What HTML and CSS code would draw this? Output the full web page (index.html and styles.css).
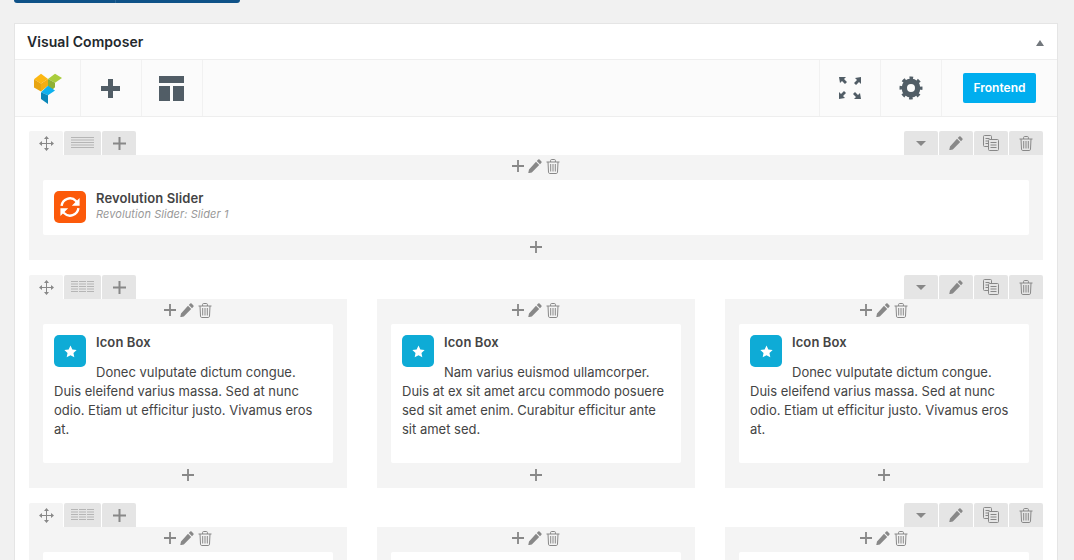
FILE: index.html
```html
<!DOCTYPE html>
<html lang="en">
<head>
<meta charset="utf-8">
<title>Visual Composer</title>
<link rel="stylesheet" href="styles.css">
</head>
<body>
<svg class="sprites" aria-hidden="true">
  <symbol id="i-plus" viewBox="0 0 13 13"><path d="M5.500 0h2v5.500H13v2H7.500V13h-2V7.500H0v-2h5.500z"/></symbol>
  <symbol id="i-pencil" viewBox="0 0 14 14"><path d="M10.200.6a1 1 0 0 1 1.400 0l1.800 1.800a1 1 0 0 1 0 1.400l-1.400 1.400-3.200-3.200zM8 2.800l3.200 3.200-7.400 7.400-3.600.9.800-3.700z"/></symbol>
  <symbol id="i-trash" viewBox="0 0 14 15"><path fill="none" stroke="currentColor" d="M.5 3h13M2 3l.5 10.200c0 .7.5 1.300 1.200 1.300h6.600c.7 0 1.200-.6 1.200-1.300L12 3M4.600 3V1.400c0-.5.4-.9.9-.9h3c.5 0 .9.4.9.9V3M4.700 5v7.500M7 5v7.500M9.300 5v7.500"/></symbol>
  <symbol id="i-copy" viewBox="0 0 16 16"><path fill="none" stroke="currentColor" d="M5.500 11.500h-4a1 1 0 0 1-1-1v-9a1 1 0 0 1 1-1h6a1 1 0 0 1 1 1V4M2.500 3.500h4M2.500 6h2.500M2.500 8.500h2.500M6.500 4.500h8a1 1 0 0 1 1 1v9a1 1 0 0 1-1 1h-8a1 1 0 0 1-1-1v-9a1 1 0 0 1 1-1zM7.500 7.500h6M7.500 10h6M7.500 12.500h6"/></symbol>
  <symbol id="i-move" viewBox="0 0 15 15"><path d="M7.500 0 10 3H8v4h4V5l3 2.500L12 10V8H8v4h2l-2.500 3L5 12h2V8H3v2L0 7.500 3 5v2h4V3H5z"/></symbol>
  <symbol id="i-star" viewBox="0 0 14 14"><path d="M7 .6l2 4.200 4.600.6-3.400 3.200.9 4.600L7 11l-4.100 2.200.9-4.600L.4 5.400 5 4.800z"/></symbol>
  <symbol id="i-rows1" viewBox="0 0 23 12"><path d="M0 .5h23M0 3h23M0 5.500h23M0 8h23M0 10.500h23" stroke="currentColor" fill="none"/></symbol>
  <symbol id="i-rows3" viewBox="0 0 23 12"><path d="M0 .5h7M0 3h7M0 5.500h7M0 8h7M0 10.500h7M8 .5h7M8 3h7M8 5.500h7M8 8h7M8 10.500h7M16 .5h7M16 3h7M16 5.500h7M16 8h7M16 10.500h7" stroke="currentColor" fill="none"/></symbol>
</svg>

<div class="top-buttons"><span class="top-btn top-btn-a"></span><span class="top-btn top-btn-b"></span></div>

<section class="panel">
  <h2 class="panel-title"><span>Visual Composer</span><i class="panel-caret"></i></h2>
  <nav class="navbar">
    <div class="nav-cell nav-logo">
      <svg width="28" height="31" viewBox="0 0 28 31">
        <path fill="#fcb712" d="M0 6.300 7 .7l7 5.400-7 4.400z"/>
        <path fill="#e8a511" d="M0 6.300l7 4.200v8L0 14.500z"/>
        <path fill="#f4ae12" d="M7 10.500l7-4.400v6.700L7 18.500z"/>
        <path fill="#a9cd3c" d="M14 6.100 21 .8l7 4.300-7 4.600z"/>
        <path fill="#8fb135" d="M14 6.100l7 3.600v4.500l-7 6.300z"/>
        <path fill="#0db1ee" d="M7 19.300l7-6.500 7 4.700-7 4.800z"/>
        <path fill="#0a87b8" d="M7 19.300l7 3V31l-7-5z"/>
      </svg>
    </div>
    <div class="nav-cell nav-cell-tool">
      <svg class="nav-icon" width="19" height="19" viewBox="0 0 19 19"><path d="M7 0h5v7h7v5h-7v7H7v-7H0V7h7z"/></svg>
    </div>
    <div class="nav-cell nav-cell-tool">
      <div class="layout-icon"><span class="layout-top"></span><span class="layout-left"></span><span class="layout-right"></span></div>
    </div>
    <div class="nav-spacer"></div>
    <div class="nav-cell nav-cell-left">
      <svg class="nav-icon" width="22" height="22" viewBox="0 0 22 22">
        <path d="M0 0h7L5 2l3 3-2 2-3-3-2 2zM22 0v7l-2-2-3 3-2-2 3-3-2-2zM0 22v-7l2 2 3-3 2 2-3 3 2 2zM22 22h-7l2-2-3-3 2-2 3 3 2-2z"/>
      </svg>
    </div>
    <div class="nav-cell nav-cell-left">
      <svg class="gear" width="24" height="24" viewBox="0 0 24 24">
        <circle class="gear-ring" cx="12" cy="12" r="6.700"/>
        <circle class="gear-teeth" cx="12" cy="12" r="10"/>
      </svg>
    </div>
    <div class="nav-action"><a class="btn-frontend">Frontend</a></div>
  </nav>

  <div class="rows">
    <div class="row">
      <div class="row-tabs">
        <div class="tab-group">
          <span class="tab tab-move"><svg width="15" height="15"><use href="#i-move"/></svg></span>
          <span class="tab tab-layout"><svg class="lines" width="23" height="12"><use href="#i-rows1"/></svg></span>
          <span class="tab tab-add"><svg width="13" height="13"><use href="#i-plus"/></svg></span>
        </div>
        <div class="tab-group">
          <span class="tab tab-action"><i class="tab-caret"></i></span>
          <span class="tab tab-action"><svg width="14" height="14"><use href="#i-pencil"/></svg></span>
          <span class="tab tab-action"><svg width="16" height="16"><use href="#i-copy"/></svg></span>
          <span class="tab tab-action"><svg width="14" height="15"><use href="#i-trash"/></svg></span>
        </div>
      </div>
      <div class="columns">
        <div class="column">
          <div class="col-controls"><svg width="12" height="12"><use href="#i-plus"/></svg><svg width="14" height="14"><use href="#i-pencil"/></svg><svg width="14" height="15"><use href="#i-trash"/></svg></div>
          <div class="element element-slider">
            <span class="el-icon el-icon-rev">
              <svg width="24" height="24" viewBox="0 0 20 20"><path fill="none" stroke="#fff" stroke-width="2" d="M3 9a7 7 0 0 1 12-4l1.500 2M17 11a7 7 0 0 1-12 4l-1.500-2"/><path fill="#fff" d="M18 2.500V9h-6.500zM2 17.500V11h6.500z"/></svg>
            </span>
            <div class="el-title">Revolution Slider</div>
            <div class="el-sub">Revolution Slider: Slider 1</div>
          </div>
          <div class="col-bottom"><svg width="12" height="12"><use href="#i-plus"/></svg></div>
        </div>
      </div>
    </div>

    <div class="row">
      <div class="row-tabs">
        <div class="tab-group">
          <span class="tab tab-move"><svg width="15" height="15"><use href="#i-move"/></svg></span>
          <span class="tab tab-layout"><svg class="lines" width="23" height="12"><use href="#i-rows3"/></svg></span>
          <span class="tab tab-add"><svg width="13" height="13"><use href="#i-plus"/></svg></span>
        </div>
        <div class="tab-group">
          <span class="tab tab-action"><i class="tab-caret"></i></span>
          <span class="tab tab-action"><svg width="14" height="14"><use href="#i-pencil"/></svg></span>
          <span class="tab tab-action"><svg width="16" height="16"><use href="#i-copy"/></svg></span>
          <span class="tab tab-action"><svg width="14" height="15"><use href="#i-trash"/></svg></span>
        </div>
      </div>
      <div class="columns">
        <div class="column">
          <div class="col-controls"><svg width="12" height="12"><use href="#i-plus"/></svg><svg width="14" height="14"><use href="#i-pencil"/></svg><svg width="14" height="15"><use href="#i-trash"/></svg></div>
          <div class="element element-box">
            <span class="el-icon el-icon-box"><svg width="13" height="13"><use href="#i-star"/></svg></span>
            <div class="el-title">Icon Box</div>
            <p class="el-text">Donec vulputate dictum congue. Duis eleifend varius massa. Sed at nunc odio. Etiam ut efficitur justo. Vivamus eros at.</p>
          </div>
          <div class="col-bottom"><svg width="12" height="12"><use href="#i-plus"/></svg></div>
        </div>
        <div class="column">
          <div class="col-controls"><svg width="12" height="12"><use href="#i-plus"/></svg><svg width="14" height="14"><use href="#i-pencil"/></svg><svg width="14" height="15"><use href="#i-trash"/></svg></div>
          <div class="element element-box">
            <span class="el-icon el-icon-box"><svg width="13" height="13"><use href="#i-star"/></svg></span>
            <div class="el-title">Icon Box</div>
            <p class="el-text">Nam varius euismod ullamcorper. Duis at ex sit amet arcu commodo posuere sed sit amet enim. Curabitur efficitur ante sit amet sed.</p>
          </div>
          <div class="col-bottom"><svg width="12" height="12"><use href="#i-plus"/></svg></div>
        </div>
        <div class="column">
          <div class="col-controls"><svg width="12" height="12"><use href="#i-plus"/></svg><svg width="14" height="14"><use href="#i-pencil"/></svg><svg width="14" height="15"><use href="#i-trash"/></svg></div>
          <div class="element element-box">
            <span class="el-icon el-icon-box"><svg width="13" height="13"><use href="#i-star"/></svg></span>
            <div class="el-title">Icon Box</div>
            <p class="el-text">Donec vulputate dictum congue. Duis eleifend varius massa. Sed at nunc odio. Etiam ut efficitur justo. Vivamus eros at.</p>
          </div>
          <div class="col-bottom"><svg width="12" height="12"><use href="#i-plus"/></svg></div>
        </div>
      </div>
    </div>

    <div class="row">
      <div class="row-tabs">
        <div class="tab-group">
          <span class="tab tab-move"><svg width="15" height="15"><use href="#i-move"/></svg></span>
          <span class="tab tab-layout"><svg class="lines" width="23" height="12"><use href="#i-rows3"/></svg></span>
          <span class="tab tab-add"><svg width="13" height="13"><use href="#i-plus"/></svg></span>
        </div>
        <div class="tab-group">
          <span class="tab tab-action"><i class="tab-caret"></i></span>
          <span class="tab tab-action"><svg width="14" height="14"><use href="#i-pencil"/></svg></span>
          <span class="tab tab-action"><svg width="16" height="16"><use href="#i-copy"/></svg></span>
          <span class="tab tab-action"><svg width="14" height="15"><use href="#i-trash"/></svg></span>
        </div>
      </div>
      <div class="columns">
        <div class="column">
          <div class="col-controls"><svg width="12" height="12"><use href="#i-plus"/></svg><svg width="14" height="14"><use href="#i-pencil"/></svg><svg width="14" height="15"><use href="#i-trash"/></svg></div>
          <div class="element element-box"></div>
        </div>
        <div class="column">
          <div class="col-controls"><svg width="12" height="12"><use href="#i-plus"/></svg><svg width="14" height="14"><use href="#i-pencil"/></svg><svg width="14" height="15"><use href="#i-trash"/></svg></div>
          <div class="element element-box"></div>
        </div>
        <div class="column">
          <div class="col-controls"><svg width="12" height="12"><use href="#i-plus"/></svg><svg width="14" height="14"><use href="#i-pencil"/></svg><svg width="14" height="15"><use href="#i-trash"/></svg></div>
          <div class="element element-box"></div>
        </div>
      </div>
    </div>
  </div>
</section>
</body>
</html>
```

FILE: styles.css
```css
* { box-sizing: border-box; }
html, body { height: 560px; overflow: hidden; }
body {
  margin: 0;
  padding: 0 16px 0 14px;
  background: #f1f1f1;
  font-family: Inter, "Liberation Sans", sans-serif;
  font-size: 13px;
  color: #32373c;
}
svg { display: block; fill: currentColor; }
.sprites { width: 0; height: 0; position: absolute; }

.top-buttons { display: flex; width: 226px; height: 3px; margin-bottom: 20px; }
.top-btn { background: #0f5288; }
.top-btn-a { width: 102px; border-radius: 0 0 0 3px; border-right: 1px solid #2a6696; }
.top-btn-b { flex: 1; border-radius: 0 0 3px 0; }

.panel { background: #fff; border: 1px solid #e5e5e5; height: 600px; }
.panel-title {
  display: flex;
  justify-content: space-between;
  align-items: center;
  height: 35px;
  margin: 0;
  padding: 0 13px 0 12px;
  font-size: 14px;
  font-weight: 600;
  line-height: 36px;
  letter-spacing: .05px;
  color: #23282d;
}
.panel-caret { width: 0; height: 0; margin-top: 2px; border: 4px solid transparent; border-top: 0; border-bottom: 6px solid #72777c; }

.navbar {
  display: flex;
  height: 58px;
  background: #fbfbfb;
  border-top: 1px solid #eeeeee;
  border-bottom: 1px solid #eeeeee;
  color: #515d66;
}
.nav-cell {
  display: flex;
  align-items: center;
  justify-content: center;
  width: 61px;
  border-right: 1px solid #f1f1f1;
}
.nav-logo { width: 66px; }
.nav-cell-tool { padding-right: 1px; }
.nav-cell-left { border-right: 0; border-left: 1px solid #f1f1f1; }
.nav-spacer { flex: 1; }
.nav-action { display: flex; align-items: center; padding: 0 21px; border-left: 1px solid #f1f1f1; }
.btn-frontend {
  display: block;
  width: 73px;
  height: 30px;
  line-height: 30px;
  text-align: center;
  background: #00aeef;
  color: #fff;
  border-radius: 2px;
  font-size: 12px;
  font-weight: 600;
}
.gear circle { fill: none; stroke: #515d66; }
.gear-ring { stroke-width: 5.400; }
.gear-teeth { stroke-width: 3; stroke-dasharray: 3.600 4.254; stroke-dashoffset: 1.800; }
.layout-icon { display: grid; grid-template-columns: 11px 11px; grid-template-rows: 7px 15px; gap: 3px; width: 25px; }
.layout-icon span { background: #515d66; }
.layout-top { grid-column: 1 / 3; }

.rows { display: flex; flex-direction: column; gap: 15px; padding: 14px; }
.row-tabs { display: flex; justify-content: space-between; height: 24px; }
.tab-group { display: flex; gap: 1px; }
.tab {
  display: flex;
  align-items: center;
  justify-content: center;
  height: 24px;
  background: #e5e5e5;
  border-radius: 2px 2px 0 0;
  color: #888;
}
.tab-move { width: 34px; background: #f4f4f4; }
.tab-layout { width: 37px; }
.tab-layout .lines { color: #b5b5b5; }
.tab-add { width: 34px; }
.tab-action { width: 34px; }
.tab-caret { width: 0; height: 0; border: 5px solid transparent; border-bottom: 0; border-top: 5px solid #888; }

.columns { display: flex; gap: 30px; }
.column { flex: 1; min-width: 0; background: #f4f4f4; padding: 0 14px; }
.col-controls {
  display: flex;
  justify-content: center;
  align-items: center;
  gap: 4px;
  height: 25px;
  padding-bottom: 3px;
  color: #888;
}
.col-bottom {
  display: flex;
  justify-content: center;
  align-items: center;
  height: 25px;
  padding-bottom: 1px;
  color: #888;
}
.element { background: #fff; border-radius: 2px; padding: 11px; color: #444; }
.element-slider { height: 55px; }
.element-box { height: 139px; }
.el-icon {
  float: left;
  display: flex;
  align-items: center;
  justify-content: center;
  width: 32px;
  height: 32px;
  margin-right: 10px;
  border-radius: 5px;
  color: #fff;
}
.el-icon-rev { background: #fc5a0a; }
.el-icon-box { background: #0eabd6; }
.el-title { font-size: 13px; font-weight: 600; line-height: 14px; letter-spacing: .1px; color: #444; }
.el-sub { font-size: 11px; font-style: italic; color: #999; line-height: 15px; margin-top: 2px; letter-spacing: .08px; }
.el-text { margin: 14px 0 0; line-height: 19px; font-size: 13px; }
```
